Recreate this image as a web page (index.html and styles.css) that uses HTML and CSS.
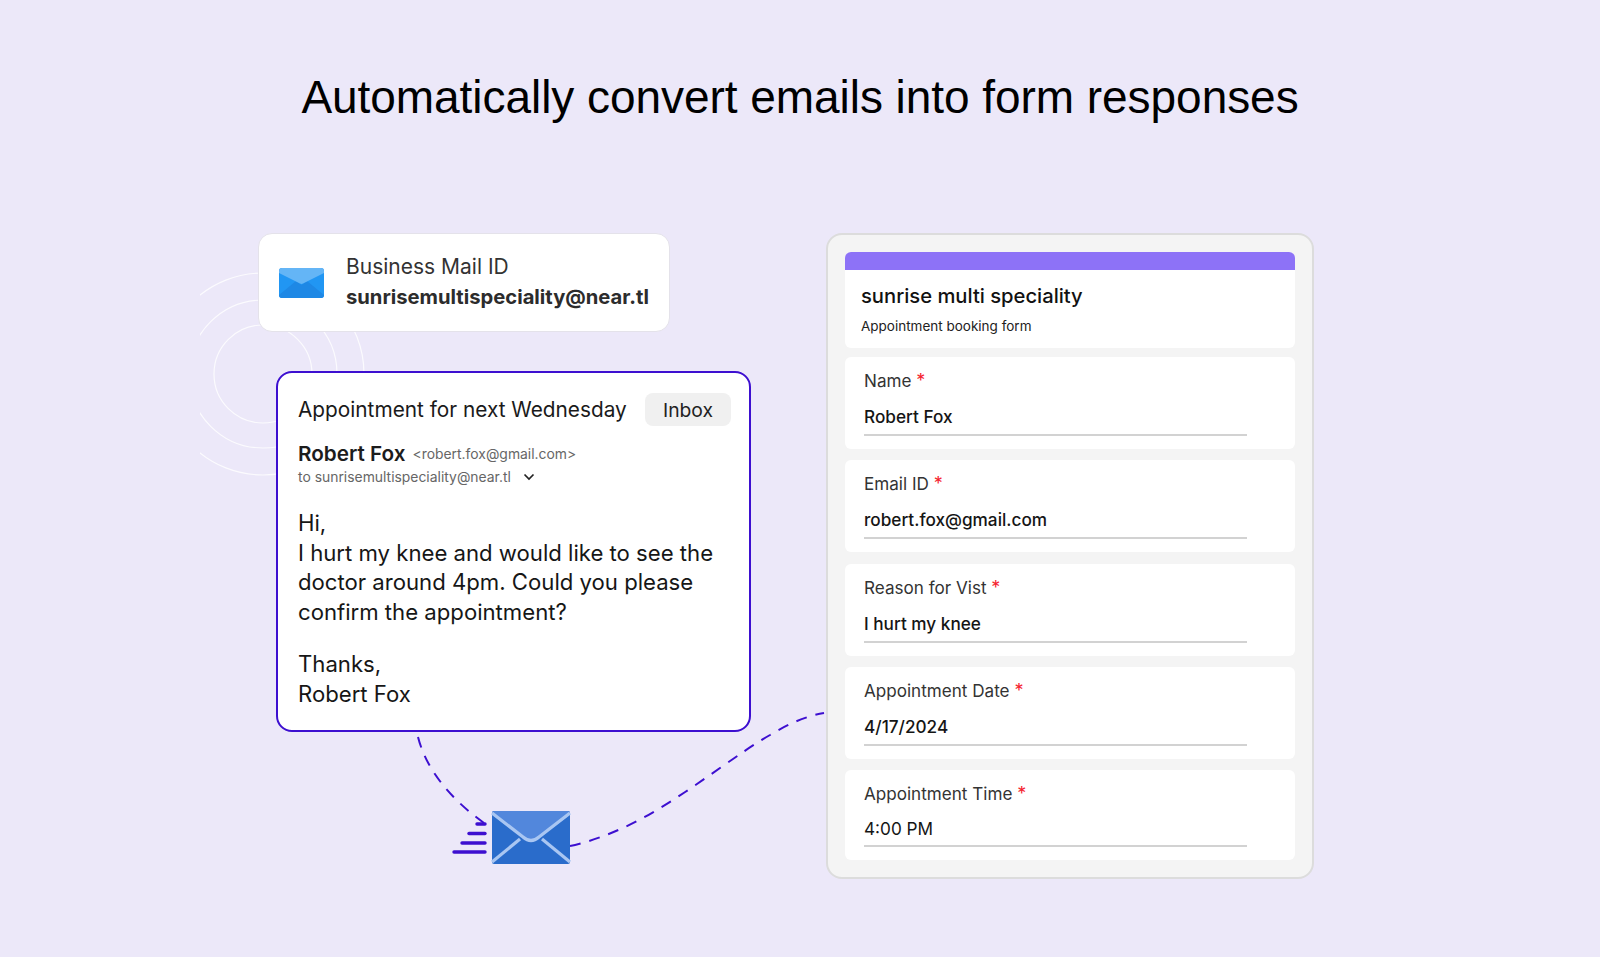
FILE: index.html
```html
<!DOCTYPE html>
<html lang="en">
<head>
<meta charset="utf-8">
<title>Automatically convert emails into form responses</title>
<link rel="stylesheet" href="styles.css">
</head>
<body>
<main class="stage">
  <svg class="backdrop" width="1600" height="957" viewBox="0 0 1600 957" aria-hidden="true">
    <defs><clipPath id="rings"><rect x="200" y="250" width="200" height="250"/></clipPath></defs>
    <g clip-path="url(#rings)" fill="none" stroke="#fff" stroke-opacity=".8" stroke-width="1.2">
      <circle cx="263" cy="374" r="49"/>
      <circle cx="263" cy="374" r="74"/>
      <circle cx="263" cy="374" r="101"/>
    </g>
  </svg>
  <h1 class="title">Automatically convert emails into form responses</h1>
  <div class="columns">
    <section class="left">
      <div class="mail-id">
        <svg class="mail-icon" width="45" height="30" viewBox="0 0 45 30" aria-hidden="true">
          <rect width="45" height="30" rx="3" fill="#2196f3"/>
          <path d="M0 27 L17 13 L22.500 17 L28 13 L45 27 Q45 30 42 30 L3 30 Q0 30 0 27Z" fill="#1e88e5"/>
          <path d="M0 3 Q0 0 3 0 L42 0 Q45 0 45 3 L45 5 L24 15.500 Q22.500 16.300 21 15.500 L0 5Z" fill="#64b5f6"/>
        </svg>
        <div class="mail-id-text">
          <div class="mail-id-label">Business Mail ID</div>
          <div class="mail-id-addr">sunrisemultispeciality@near.tl</div>
        </div>
      </div>
      <article class="email">
        <div class="subject-row">
          <span class="subject">Appointment for next Wednesday</span>
          <span class="pill">Inbox</span>
        </div>
        <div class="sender-row">
          <span class="sender">Robert Fox</span>
          <span class="sender-addr">&lt;robert.fox@gmail.com&gt;</span>
        </div>
        <div class="to-row">
          <span>to sunrisemultispeciality@near.tl</span>
          <svg class="chevron" width="12" height="8" viewBox="0 0 12 8" aria-hidden="true"><path d="M1.500 1.500 L6 6 L10.500 1.500" fill="none" stroke="#222" stroke-width="1.700"/></svg>
        </div>
        <p class="para para-first">Hi,<br>I hurt my knee and would like to see the<br>doctor around 4pm. Could you please<br>confirm the appointment?</p>
        <p class="para para-last">Thanks,<br>Robert Fox</p>
      </article>
    </section>
    <section class="form">
      <div class="form-head">
        <div class="form-bar"></div>
        <div class="form-name">sunrise multi speciality</div>
        <div class="form-desc">Appointment booking form</div>
      </div>
      <div class="field">
        <div class="field-label">Name <span class="req">*</span></div>
        <div class="field-value">Robert Fox</div>
      </div>
      <div class="field">
        <div class="field-label">Email ID <span class="req">*</span></div>
        <div class="field-value">robert.fox@gmail.com</div>
      </div>
      <div class="field">
        <div class="field-label">Reason for Vist <span class="req">*</span></div>
        <div class="field-value">I hurt my knee</div>
      </div>
      <div class="field">
        <div class="field-label">Appointment Date <span class="req">*</span></div>
        <div class="field-value">4/17/2024</div>
      </div>
      <div class="field field-last">
        <div class="field-label">Appointment Time <span class="req">*</span></div>
        <div class="field-value">4:00 PM</div>
      </div>
    </section>
  </div>
  <svg class="overlay" width="1600" height="957" viewBox="0 0 1600 957" aria-hidden="true">
    <g fill="none" stroke="#3d0fd0" stroke-width="2" stroke-dasharray="11 9">
      <path d="M418 737 C426 768 448 797 484 823"/>
      <path d="M570 846 C590 842 625 830 660 808 C700 784 740 752 770 735 C788 724 806 716 824 713"/>
    </g>
    <g stroke="#3d0fd0" stroke-width="3.400" stroke-linecap="round">
      <path d="M477 824 H485"/>
      <path d="M469 833.500 H485"/>
      <path d="M462 843 H485"/>
      <path d="M454 852 H485"/>
    </g>
    <rect x="492" y="811" width="78" height="53" rx="2" fill="#2a6ccb"/>
    <path d="M492 813 Q492 811 494 811 H568 Q570 811 570 813 L570 815 L536 840 Q531 843 526 840 L492 815Z" fill="#5287dc"/>
    <g fill="none" stroke="#a9c6f2" stroke-width="3.200">
      <path d="M492 813 L523 837 Q531 844 539 837 L570 813"/>
      <path d="M492 862 L520 839"/>
      <path d="M570 862 L542 839"/>
    </g>
  </svg>
</main>
</body>
</html>
```
FILE: styles.css
```css
* { box-sizing: border-box; }
html, body { margin: 0; padding: 0; }
body {
  width: 1600px;
  height: 957px;
  overflow: hidden;
  background: #ece8f9;
  font-family: Inter, "Liberation Sans", sans-serif;
  color: #111;
}
.stage { position: relative; width: 1600px; height: 957px; }
.backdrop, .overlay { position: absolute; left: 0; top: 0; }
.backdrop { z-index: 0; }
.overlay { z-index: 3; pointer-events: none; }
.title {
  position: relative;
  margin: 0;
  padding-top: 68px;
  height: 233px;
  text-align: center;
  font-family: "Liberation Sans", Arial, sans-serif;
  font-weight: 400;
  font-size: 46px;
  line-height: 58px;
  letter-spacing: -.05px;
  color: #000;
}
.columns {
  position: relative;
  z-index: 1;
  display: flex;
  align-items: flex-start;
  padding-left: 258px;
}
.left { width: 568px; }
.mail-id {
  width: 412px;
  height: 99px;
  display: flex;
  align-items: center;
  gap: 22px;
  padding-left: 20px;
  background: #fff;
  border: 1px solid #e4e2ea;
  border-radius: 14px;
}
.mail-id-text { display: flex; flex-direction: column; gap: 5px; margin-top: -2px; }
.mail-id-label { font-size: 21px; line-height: 25px; color: #333; }
.mail-id-addr { font-size: 20.200px; line-height: 25px; font-weight: 700; color: #2c2c2c; }
.email {
  margin: 39px 0 0 18px;
  width: 475px;
  height: 361px;
  padding: 19px 18px 0 20px;
  background: #fff;
  border: 2px solid #3d0fd0;
  border-radius: 16px;
}
.subject-row { display: flex; align-items: center; justify-content: space-between; height: 34px; }
.subject { font-size: 20.800px; color: #1a1a1a; }
.pill {
  width: 86px;
  height: 33px;
  padding-top: 1px;
  display: flex;
  align-items: center;
  justify-content: center;
  background: #f0f0f0;
  border-radius: 8px;
  font-size: 19.300px;
  color: #222;
}
.sender-row { display: flex; align-items: center; gap: 7px; margin-top: 15px; line-height: 26px; }
.sender { font-size: 20.700px; font-weight: 600; color: #1c1c1c; }
.sender-addr { font-size: 13.900px; color: #666; }
.to-row { display: flex; align-items: center; gap: 12px; font-size: 13.900px; color: #666; height: 20px; margin-top: 0; }
.para { margin: 0; font-size: 22.150px; line-height: 29.600px; color: #161616; }
.para-first { margin-top: 22px; }
.para-last { margin-top: 23px; }
.form {
  width: 488px;
  height: 646px;
  padding: 17px 17px 0;
  background: #f4f4f4;
  border: 2px solid #dcdcdc;
  border-radius: 16px;
}
.form-head {
  height: 96px;
  background: #fff;
  border-radius: 6px;
  overflow: hidden;
  margin-bottom: 9px;
}
.form-bar { height: 18px; background: #8d72f7; }
.form-name { margin: 13px 0 0 16px; font-size: 20.200px; line-height: 26px; font-weight: 500; color: #111; }
.form-desc { margin: 8px 0 0 16px; font-size: 13.500px; line-height: 18px; color: #222; }
.field {
  height: 92px;
  margin-bottom: 11.300px;
  padding: 13px 48px 0 19px;
  background: #fff;
  border-radius: 6px;
}
.field-last { height: 90px; padding-top: 13px; margin-bottom: 0; }
.field-label { font-size: 17.100px; line-height: 22px; color: #333; }
.req { color: #f5232f; font-size: 18px; }
.field-value {
  height: 44px;
  padding-top: 14px;
  font-size: 17.200px;
  line-height: 22px;
  font-weight: 450;
  color: #151515;
  border-bottom: 2px solid #d2d2d2;
}
.field-last .field-value { height: 42px; padding-top: 13px; font-weight: 400; }
```
